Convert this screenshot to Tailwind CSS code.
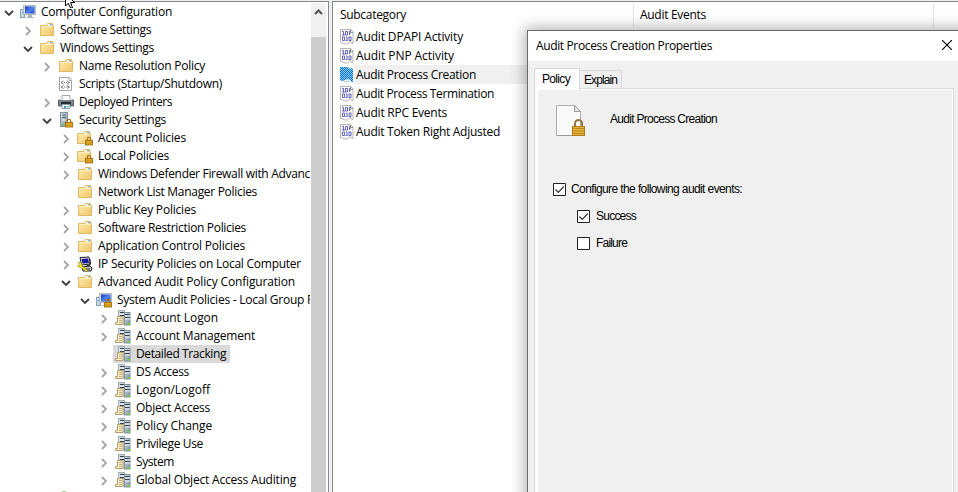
<!DOCTYPE html>
<html lang="en">
<head>
<meta charset="utf-8">
<title>Group Policy Editor</title>
<script src="https://cdn.jsdelivr.net/npm/@tailwindcss/browser@4"></script>
</head>
<body class="relative flex h-[492px] w-[958px] overflow-hidden bg-[#f0f0f0] pt-px font-['Open_Sans','Noto_Sans',sans-serif] text-[12px] text-black">
<svg class="absolute h-0 w-0">
  <defs>
    <linearGradient id="gold" x1="0" y1="0" x2="1" y2="1"><stop offset="0" stop-color="#ffedb0"/><stop offset="1" stop-color="#efc668"/></linearGradient>
    <linearGradient id="screen" x1="0" y1="0" x2="1" y2="1"><stop offset="0" stop-color="#1535b5"/><stop offset=".5" stop-color="#4d82ee"/><stop offset="1" stop-color="#1f48cc"/></linearGradient>
    <linearGradient id="metal" x1="0" y1="0" x2="1" y2="1"><stop offset="0" stop-color="#dce7ed"/><stop offset="1" stop-color="#778a98"/></linearGradient>
    <pattern id="dither" width="2" height="2" patternUnits="userSpaceOnUse"><rect width="2" height="2" fill="#8fc4ee"/><rect width="1" height="1" fill="#0078d7"/><rect x="1" y="1" width="1" height="1" fill="#0078d7"/></pattern>
  </defs>
  <symbol id="lock" viewBox="0 0 9 10"><path d="M2.500 5V3a2 2 0 0 1 4 0v2" fill="none" stroke="#a77a1d" stroke-width="1.500"/><rect x=".5" y="4.500" width="8" height="5" fill="#e6ac25" stroke="#a36e08"/><path d="M1 6.500h7M1 8h7" stroke="#bd8414" stroke-width=".6"/></symbol>
  <symbol id="folder" viewBox="0 0 16 16"><path d="M1.500 3.500h6l1-2h5v2h1v10h-13z" fill="url(#gold)" stroke="#dfb968"/><path d="M9 2h4v1.500H8.500z" fill="#fff"/><path d="M11 2.300h2v1h-2z" fill="#4c9de0"/><path d="M2 4.500h12" stroke="#fff0bd"/></symbol>
  <symbol id="folderlock" viewBox="0 0 16 16"><use href="#folder" x="-1" width="16" height="16"/><use href="#lock" x="8" y="6" width="8" height="10"/></symbol>
  <symbol id="computer" viewBox="0 0 16 16"><rect x=".5" y="5.500" width="4" height="8" fill="#c4d8e8" stroke="#8c9fb0"/><path d="M2 8.500h1.500" stroke="#33a0e0"/><rect x="3.500" y="1.500" width="12" height="9" fill="#d5d9df" stroke="#b4b9c0"/><rect x="5" y="2.500" width="9.500" height="7" fill="url(#screen)"/><path d="M8 11h4v2h2v1H6v-1h2z" fill="#a9b1bb"/></symbol>
  <symbol id="computerlock" viewBox="0 0 16 16"><use href="#computer" width="16" height="16"/><use href="#lock" x="8" y="6" width="8" height="10"/></symbol>
  <symbol id="script" viewBox="0 0 16 16"><path d="M1.500 1.500h10l2 2v11h-12z" fill="#fbfbfb" stroke="#a5a5a5"/><path d="M11 1.500v3h3" fill="none" stroke="#aaa"/><path d="M5.500 5 3 6.500 5.500 8M9 5l2.500 1.500L9 8M5.500 9.500 3 11l2.500 1.500M9 9.500l2.500 1.500L9 12.500" fill="none" stroke="#555" stroke-width=".8"/><path d="M6 6.500h3M6 11h3" stroke="#666" stroke-width=".9" stroke-dasharray="1 1"/></symbol>
  <symbol id="printer" viewBox="0 0 16 16"><path d="M4 1.500h8v5H4z" fill="#fff" stroke="#a2a8ae"/><path d="M.5 6h2l1 1h9l1-1h2v6H.5z" fill="#82878d" stroke="#5d6268"/><path d="M3 8h10v3H3z" fill="#222c34"/><path d="M4 10.500h8v4H4z" fill="#f7fbff" stroke="#8d9da9"/><path d="M6 12h2v2H6z" fill="#3d9cdc"/><path d="M9 12h2v1H9z" fill="#48b46c"/></symbol>
  <symbol id="serverlock" viewBox="0 0 16 16"><rect x="2.500" y=".5" width="7" height="14" fill="url(#metal)" stroke="#81919c"/><path d="M4 3h4M4 5.500h4" stroke="#53636f"/><path d="M4 8h4" stroke="#eef5fa"/><path d="M4 12.500h1.500" stroke="#3dc747"/><use href="#lock" x="7" y="6" width="8" height="10"/></symbol>
  <symbol id="ipsec" viewBox="0 0 16 16"><path d="m3 1.500 9-.5 1.500 7-9 1z" fill="#dadada" stroke="#222"/><path d="m4.500 3 6.500-.500 1 4.500-6.500.5z" fill="#1616a5"/><path d="M13 3v6l-5 1.500" fill="none" stroke="#111"/><path d="m5 11 8-1 2 2-1 3H6z" fill="#c9c9c9" stroke="#222"/><path d="M8 13h5" stroke="#222"/><path d="M1 6.500 3.500 6 5 8.500 4.500 10l6 4-1 1.500-6-4L1.500 11 .5 9l2 .3.5-1z" fill="#ffee22" stroke="#7b7110" stroke-width=".5"/></symbol>
  <symbol id="audit" viewBox="0 0 16 16"><rect x="3.500" y=".5" width="6" height="13" fill="#cdd8dd" stroke="#a3b1b9"/><path d="M5 2.500h4M5 5.500h4" stroke="#34424b"/><rect x="9.500" y="2.500" width="5.500" height="12.500" fill="url(#metal)" stroke="#8291a0"/><path d="M10 4.500h4.500M10 7.500h4.500" stroke="#34424b"/><path d="M10 6h5M4 4h5M10 9h5" stroke="#eff5f8"/><path d="M12.500 13h2v1.500h-2z" fill="#6bea14"/><path d="M2.500 6.500h5.500v8H.5v-2h2z" fill="#fff2ca" stroke="#b39b6c"/><path d="M4 8.500h3M4 10.500h3M4 12.500h3" stroke="#aa8d58" stroke-width=".7"/></symbol>
  <symbol id="binary" viewBox="0 0 14 16"><path d="M.5.500h10l2.500 2.500v11.500h-1.500l-1-2-2 1-1 1.500H5l-2-1-2.500-.500z" fill="#fbfbfb" stroke="#b5b5b5"/><path d="M10.500.5V3.500H13" fill="none" stroke="#999"/><path d="M2 2.500h1.500v3.500M2 6h3M5.500 2.500h2v3.500h-2zM9.500 6V2.500h1.500M9.500 4.500h1M2.500 8h2v3.500h-2zM6 8h1v3.500M5.500 11.500h2M9 8h2v3.500H9z" fill="none" stroke="#5555bd" stroke-width=".9"/></symbol>
  <symbol id="binarysel" viewBox="0 0 14 16"><path d="M0 0h8l2 2 1-1 2 1v13h-2l-1-2-2-1-3 1-2 1-3-.5z" fill="url(#dither)"/><path d="M4 13.500 5 15h1l1-1.500 1 1h1" fill="none" stroke="#aac6dc"/></symbol>
</svg>

<!-- Console tree -->
<aside class="relative flex w-[329px] shrink-0 border-t border-r border-[#828790] bg-white">
  <div id="tree" class="w-[310px] shrink-0 overflow-hidden pt-px"></div>
  <div class="mt-px ml-px flex w-[15px] flex-col bg-[#f0f0f0]">
    <svg class="h-[34px] w-[15px] shrink-0" viewBox="0 0 15 34"><path d="m4 11 3.500-3.500L11 11" fill="none" stroke="#505050" stroke-width="2"/></svg>
    <div class="grow bg-[#cdcdcd]"></div>
  </div>
  <div class="absolute bottom-0 left-[62px] h-px w-[4px] bg-[#91dc82]"></div>
</aside>

<!-- Result list -->
<main class="ml-[3px] min-w-0 grow border-t border-l border-[#828790] bg-white">
  <div class="flex h-[25px] items-center pt-px">
    <div class="flex h-[24px] w-[301px] items-center border-r border-[#e5e5e5] pl-[7px]"><span data-w="66">Subcategory</span></div>
    <div class="flex h-[24px] w-[300px] items-center border-r border-[#e5e5e5] pl-[6px]"><span data-w="66">Audit Events</span></div>
  </div>
  <div id="list"></div>
</main>

<!-- Properties dialog -->
<section class="absolute top-[30px] left-[527px] flex h-[480px] w-[450px] flex-col border border-[#6b6b6b] bg-[#f0f0f0] shadow-[0_0_14px_2px_rgba(0,0,0,0.32)]">
  <header class="flex h-[30px] shrink-0 items-center justify-between bg-white pr-[24px] pl-[8px]">
    <span data-w="176">Audit Process Creation Properties</span>
    <svg class="-mt-[2px] h-[10px] w-[10px] shrink-0" viewBox="0 0 10 10"><path d="m0 0 10 10M10 0 0 10" stroke="#000" stroke-width="1.100"/></svg>
  </header>
  <div class="flex h-[27px] shrink-0 items-end pl-[6px] font-['Liberation_Sans',sans-serif]">
    <div class="relative z-10 -mb-[2px] flex h-[22px] w-[46px] items-start border border-b-0 border-[#d9d9d9] bg-white pt-px pl-[7px]"><span data-w="28">Policy</span></div>
    <div class="flex h-[18px] w-[42px] items-center border border-b-0 border-l-0 border-[#d9d9d9] pl-[4px]"><span data-w="33">Explain</span></div>
  </div>
  <div class="ml-[6px] h-[440px] w-[420px] border border-[#d9d9d9] bg-white pt-px pr-px pl-[3px] font-['Liberation_Sans',sans-serif]">
    <div class="h-full bg-[#f0f0f0] pt-[14px]">
      <div class="flex items-start">
        <svg class="ml-[17px] h-[34px] w-[32px] shrink-0" viewBox="0 0 32 34"><path d="M1.500 1.500h18l6 6v24h-24z" fill="#fafafa" stroke="#adadad"/><path d="M2 31.500h23" stroke="#999"/><path d="M19.500 1.500v6h6z" fill="#e6e6e6" stroke="#999"/><path d="M20 22v-2.500a3.500 3.500 0 0 1 7 0V22" fill="none" stroke="#927744" stroke-width="2"/><rect x="17.500" y="22.500" width="12" height="9" fill="#e5b23c" stroke="#b07b12"/><path d="M18 24.500h11M18 27h11M18 29.500h11" stroke="#bd8919"/></svg>
        <span class="mt-[6px] ml-[23px]" data-w="107">Audit Process Creation</span>
      </div>
      <div class="mt-[44px] ml-[15px] flex h-[14px] items-center gap-[5px]">
        <svg class="h-[13px] w-[13px] shrink-0" viewBox="0 0 13 13"><path d="M.5.5h12v12H.5z" fill="#fff" stroke="#222"/><path d="m2.500 6.500 2.800 2.800 5.500-5.800" fill="none" stroke="#333" stroke-width="1.200"/></svg>
        <span data-w="171">Configure the following audit events:</span>
      </div>
      <div class="mt-[13px] ml-[39px] flex h-[14px] items-center gap-[6px]">
        <svg class="h-[13px] w-[13px] shrink-0" viewBox="0 0 13 13"><path d="M.5.5h12v12H.5z" fill="#fff" stroke="#222"/><path d="m2.500 6.500 2.800 2.800 5.500-5.800" fill="none" stroke="#333" stroke-width="1.200"/></svg>
        <span data-w="40">Success</span>
      </div>
      <div class="mt-[13px] ml-[39px] flex h-[14px] items-center gap-[6px]">
        <svg class="h-[13px] w-[13px] shrink-0" viewBox="0 0 13 13"><path d="M.5.5h12v12H.5z" fill="#fff" stroke="#222"/></svg>
        <span data-w="31">Failure</span>
      </div>
    </div>
  </div>
</section>

<svg class="absolute top-0 left-[64px] h-[8px] w-[12px]" viewBox="0 0 12 8"><path d="M1.500-6v12l2.800-2.800L6.500 8h2L6.700 2.500h4z" fill="#fff" stroke="#000"/></svg>

<script>
// [depth, state, icon, label, label width in px]
const tree = [
  [0,'open','computer','Computer Configuration',131],
  [1,'shut','folder','Software Settings',91],
  [1,'open','folder','Windows Settings',94],
  [2,'shut','folder','Name Resolution Policy',126],
  [2,'','script','Scripts (Startup/Shutdown)',143],
  [2,'shut','printer','Deployed Printers',93],
  [2,'open','serverlock','Security Settings',87],
  [3,'shut','folderlock','Account Policies',88],
  [3,'shut','folderlock','Local Policies',71],
  [3,'shut','folder','Windows Defender Firewall with Advanc',212],
  [3,'','folder','Network List Manager Policies',159],
  [3,'shut','folder','Public Key Policies',98],
  [3,'shut','folder','Software Restriction Policies',148],
  [3,'shut','folder','Application Control Policies',147],
  [3,'shut','ipsec','IP Security Policies on Local Computer',203],
  [3,'open','folder','Advanced Audit Policy Configuration',197],
  [4,'open','computerlock','System Audit Policies - Local Group P',197],
  [5,'shut','audit','Account Logon',82],
  [5,'shut','audit','Account Management',119],
  [5,'sel','audit','Detailed Tracking',90],
  [5,'shut','audit','DS Access',53],
  [5,'shut','audit','Logon/Logoff',74],
  [5,'shut','audit','Object Access',74],
  [5,'shut','audit','Policy Change',76],
  [5,'shut','audit','Privilege Use',67],
  [5,'shut','audit','System',38],
  [5,'shut','audit','Global Object Access Auditing',160]
];
const arrows = {
  open: '<path d="m1 4 4 4 4-4" fill="none" stroke="#404040" stroke-width="1.800"/>',
  shut: '<path d="m3 2 4 4-4 4" fill="none" stroke="#a6a6a6" stroke-width="1.800"/>'
};
document.getElementById('tree').innerHTML = tree.map(([d, s, icon, label, w]) => `
  <div class="flex h-[18px] items-center whitespace-nowrap" style="padding-left:${4 + d * 19}px">
    <svg class="mt-px h-[12px] w-[10px] shrink-0" viewBox="0 0 10 12">${arrows[s] || ''}</svg>
    <div class="${s === 'sel' ? 'ml-[4px] flex h-[18px] items-center bg-[#d9d9d9] pr-[4px] pl-[2px]' : 'ml-[4px] flex h-[18px] items-center pr-[4px] pl-[2px]'}">
      <svg class="mr-[5px] h-[16px] w-[16px] shrink-0"><use href="#${icon}" width="16" height="16"/></svg>
      <span data-w="${w}">${label}</span>
    </div>
  </div>`).join('');
const list = [['Audit DPAPI Activity',107],['Audit PNP Activity',98],['Audit Process Creation',120],['Audit Process Termination',138],['Audit RPC Events',91],['Audit Token Right Adjusted',144]];
document.getElementById('list').innerHTML = list.map(([label, w], i) => `
  <div class="flex h-[19px] items-center pl-[7px]">
    <svg class="h-[16px] w-[14px] shrink-0"><use href="${i === 2 ? '#binarysel' : '#binary'}" width="14" height="16"/></svg>
    <div class="${i === 2 ? 'flex h-[19px] grow items-center bg-[#f0f0f0] pl-[2px]' : 'flex h-[19px] grow items-center pl-[2px]'}"><span data-w="${w}">${label}</span></div>
  </div>`).join('');
const ctx = document.createElement('canvas').getContext('2d');
document.querySelectorAll('[data-w]').forEach(el => {
  const pane = el.closest('section') && !el.closest('header');
  ctx.font = pane ? '12px "Liberation Sans"' : '12px "Open Sans"';
  const gap = el.dataset.w - ctx.measureText(el.textContent).width;
  el.style.whiteSpace = 'nowrap';
  el.style.flexShrink = 0;
  el.style.letterSpacing = gap / el.textContent.length + 'px';
});
</script>
</body>
</html>
